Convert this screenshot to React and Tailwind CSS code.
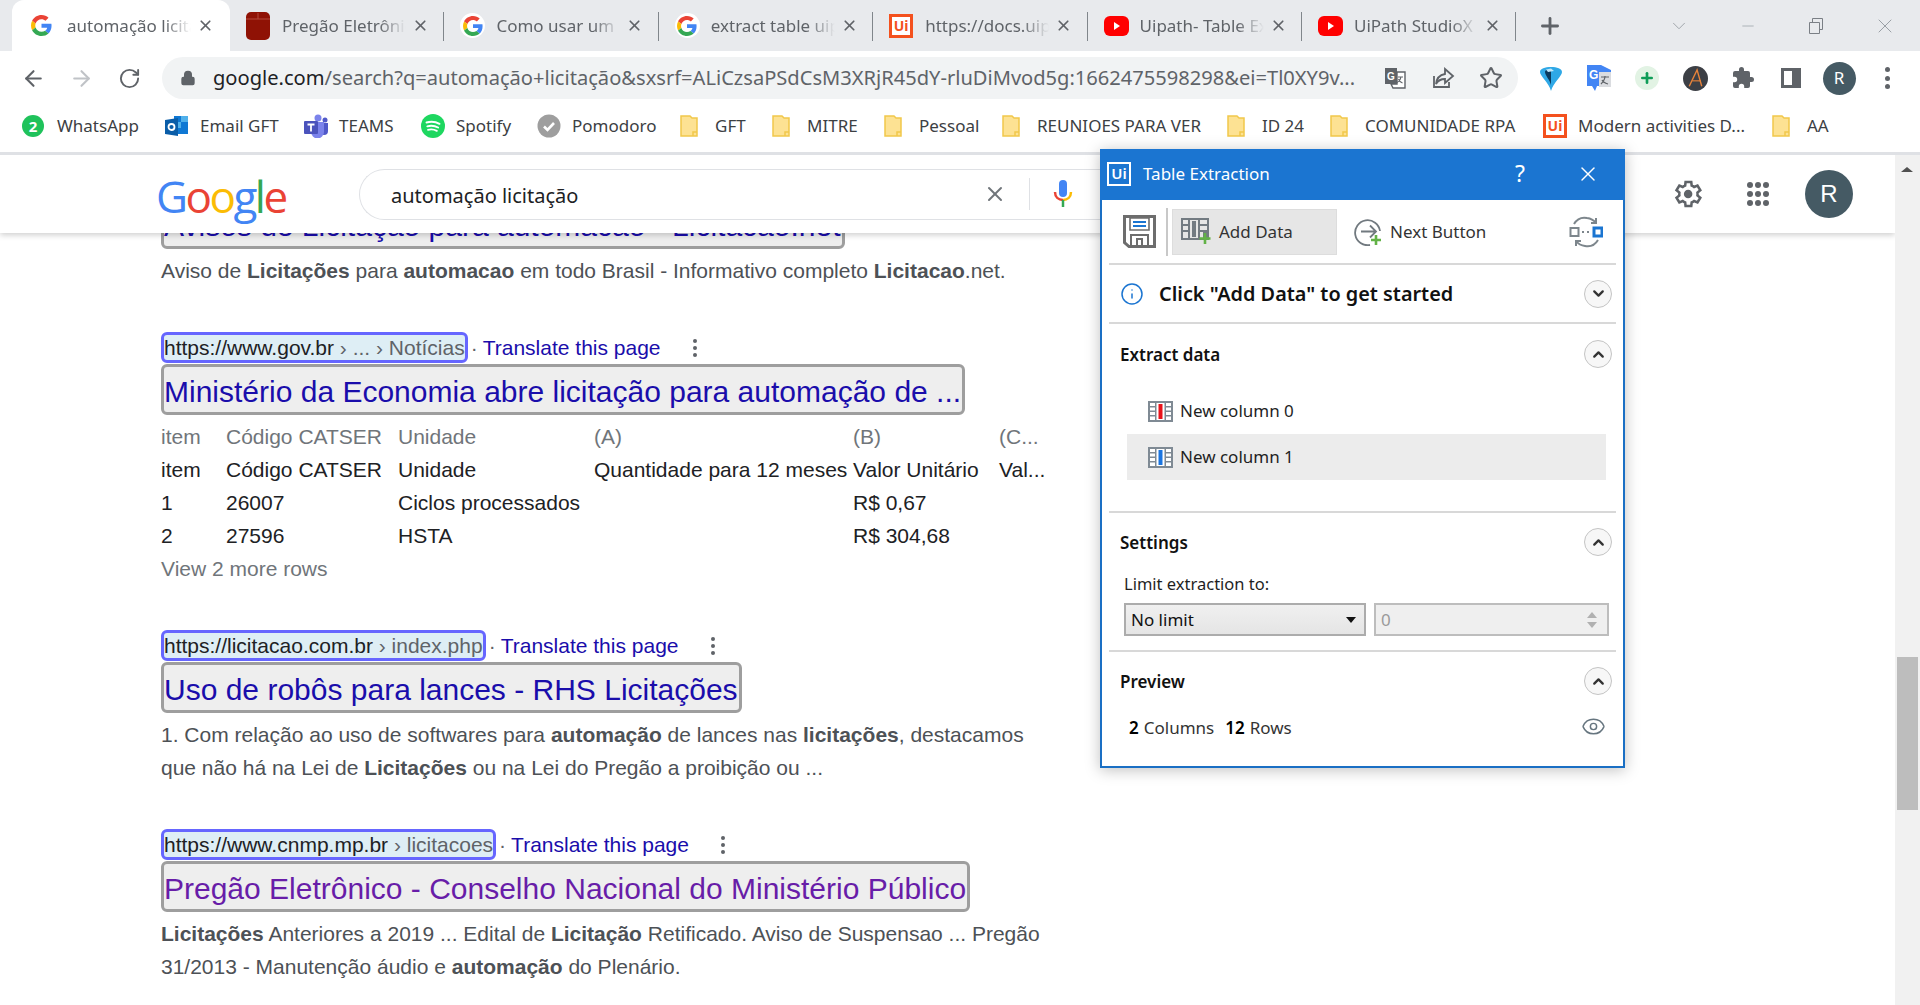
import { ArrowLeft, ArrowRight, RotateCw, Lock, Star, X, Plus, ChevronDown, ChevronUp, Info, Eye, Minus } from "lucide-react";

const GoogleG = ({ size = 21 }) => (
  <svg width={size} height={size} viewBox="0 0 48 48">
    <path fill="#EA4335" d="M24 9.5c3.54 0 6.71 1.22 9.21 3.6l6.85-6.85C35.9 2.38 30.47 0 24 0 14.62 0 6.51 5.38 2.56 13.22l7.98 6.19C12.43 13.72 17.74 9.5 24 9.5z" />
    <path fill="#4285F4" d="M46.98 24.55c0-1.57-.15-3.09-.38-4.55H24v9.02h12.94c-.58 2.96-2.26 5.48-4.78 7.18l7.73 6c4.51-4.18 7.09-10.36 7.09-17.65z" />
    <path fill="#FBBC05" d="M10.53 28.59c-.48-1.45-.76-2.99-.76-4.59s.27-3.14.76-4.59l-7.98-6.19C.92 16.46 0 20.12 0 24c0 3.88.92 7.54 2.56 10.78l7.97-6.19z" />
    <path fill="#34A853" d="M24 48c6.48 0 11.93-2.13 15.89-5.81l-7.73-6c-2.15 1.45-4.92 2.3-8.16 2.3-6.26 0-11.57-4.22-13.47-9.91l-7.98 6.19C6.51 42.62 14.62 48 24 48z" />
  </svg>
);

const GFavicon = () => (
  <span className="flex h-[25px] w-[25px] items-center justify-center rounded-full bg-white">
    <GoogleG size={20} />
  </span>
);

const PregaoIcon = () => (
  <svg width="24" height="28" viewBox="0 0 24 28">
    <rect x="0" y="0" width="24" height="28" rx="5" fill="#8f1205" />
    <path d="M0 7h24" stroke="#b5483c" strokeWidth="1" />
    <path d="M12 1v6" stroke="#b5483c" strokeWidth="1" />
  </svg>
);

const UiLogo = () => (
  <span className="flex h-[24px] w-[24px] items-center justify-center border-[3px] border-[#f4511e] bg-white font-['Noto_Sans',sans-serif] text-[14px] font-bold leading-none text-[#f4511e]">
    Ui
  </span>
);

const YouTubeIcon = () => (
  <svg width="25" height="20" viewBox="0 0 25 20">
    <rect width="25" height="20" rx="6" fill="#f00" />
    <path d="M10 6l6 4-6 4z" fill="#fff" />
  </svg>
);

const FolderIcon = () => (
  <svg width="18" height="22" viewBox="0 0 18 22">
    <path d="M1 1h9l2 2h5v18H1z" fill="#fde293" stroke="#f1c84b" strokeWidth="1.5" />
    <path d="M13 21v-4h4" fill="none" stroke="#f1c84b" strokeWidth="1.5" />
  </svg>
);

const tabs = [
  { title: "automação licitação", icon: <GoogleG />, active: true },
  { title: "Pregão Eletrônico", icon: <PregaoIcon /> },
  { title: "Como usar um", icon: <GFavicon /> },
  { title: "extract table uipath", icon: <GFavicon /> },
  { title: "https://docs.uipath", icon: <UiLogo /> },
  { title: "Uipath- Table Extraction", icon: <YouTubeIcon /> },
  { title: "UiPath StudioX", icon: <YouTubeIcon /> },
];

const Tab = ({ title, icon, active }) => (
  <div className={`relative flex h-full shrink-0 items-center ${active ? "w-[218px] rounded-t-[12px] bg-white pl-[19px]" : "w-[214.4px] pl-[16px]"}`}>
    <span className="flex w-[36px] shrink-0 justify-start">{icon}</span>
    <span className="w-[124px] overflow-hidden whitespace-nowrap text-[17px] text-[#5f6368] [mask-image:linear-gradient(to_right,black_78%,transparent)]">
      {title}
    </span>
    <X className="ml-[6px] shrink-0 text-[#5f6368]" size={17} strokeWidth={2.4} />
    {!active && <span className="absolute right-0 top-[12px] h-[29px] w-px bg-[#80868b]" />}
  </div>
);

const TabStrip = () => (
  <div className="flex h-[51px] shrink-0 items-stretch bg-[#e8eaed] pl-[12px]">
    {tabs.map((tab) => (
      <Tab key={tab.title} {...tab} />
    ))}
    <Plus className="ml-[21px] mt-[13px] text-[#5f6368]" size={26} strokeWidth={2.6} />
    <div className="ml-auto flex items-center text-[#9aa0a6]">
      <span className="flex w-[68px] justify-center"><ChevronDown size={22} strokeWidth={1} /></span>
      <span className="flex w-[69px] justify-center"><Minus size={18} strokeWidth={1} /></span>
      <span className="flex w-[68px] justify-center">
        <svg width="16" height="16" viewBox="0 0 16 16" fill="none" stroke="#7a7f85">
          <path d="M1.5 4.5h10v11h-10zM4.5 4.5v-4h10v11h-3" />
        </svg>
      </span>
      <span className="flex w-[70px] justify-center pr-[1px]"><X size={24} strokeWidth={1} /></span>
    </div>
  </div>
);

const TranslateIcon = () => (
  <svg width="24" height="24" viewBox="0 0 24 24">
    <path d="M2 2h12v16H2z" fill="#5f6368" />
    <path d="M14 6h8v16H10l-2-4h6z" fill="#fff" stroke="#5f6368" strokeWidth="1.4" />
    <text x="4" y="14" fontSize="10" fontWeight="700" fill="#fff" fontFamily="Liberation Sans">G</text>
    <path d="M15 11h5M18 10.5c-.4 3-2 5-4 6M15.5 13c.7 2 2 3.3 4 4" fill="none" stroke="#5f6368" strokeWidth="1.1" />
  </svg>
);

const ShareIcon = () => (
  <svg width="24" height="24" viewBox="0 0 24 24" fill="none" stroke="#5f6368" strokeWidth="1.8">
    <path d="M3 10v11h15v-5" />
    <path d="M14 3l8 7-8 7v-4c-4 0-7 1.5-9 5 .5-5 3.500-9 9-10z" />
  </svg>
);

const Ext = ({ children }) => <span className="flex w-[48px] shrink-0 items-center justify-center">{children}</span>;

const Toolbar = () => (
  <div className="flex h-[54px] shrink-0 items-center bg-white pl-[9px]">
    <Ext><ArrowLeft className="text-[#5f6368]" size={25} strokeWidth={2} /></Ext>
    <Ext><ArrowRight className="text-[#c0c3c7]" size={25} strokeWidth={2} /></Ext>
    <Ext><RotateCw className="text-[#5f6368]" size={23} strokeWidth={2} /></Ext>
    <div className="ml-[9px] flex h-[42px] w-[1356px] shrink-0 items-center rounded-full bg-[#f1f3f4] pl-[18px] pr-[3px]">
      <Lock className="shrink-0 text-[#5f6368]" size={16} fill="#5f6368" strokeWidth={2} />
      <span className="ml-[17px] flex-1 overflow-hidden whitespace-nowrap pt-[1px] text-[20.1px] text-[#5f6368]">
        <span className="text-[#202124]">google.com</span>/search?q=automação+licitação&amp;sxsrf=ALiCzsaPSdCsM3XRjR45dY-rluDiMvod5g:1662475598298&amp;ei=Tl0XY9v...
      </span>
      <Ext><TranslateIcon /></Ext>
      <Ext><ShareIcon /></Ext>
      <Ext><Star className="text-[#5f6368]" size={24} strokeWidth={2} /></Ext>
    </div>
    <div className="ml-[9px] flex items-center">
      <Ext>
        <svg width="24" height="25" viewBox="0 0 24 25">
          <path d="M12 25C10 17 1 10 1 6c0-3.500 5-5 11-5s11 1.500 11 5c0 4-9 11-11 19z" fill="#2fa8e6" />
          <path d="M12 19C11 14 6 9.500 6 6c0-2 3-2.500 6-2.500z" fill="#0a3a5e" />
          <path d="M7 3.500l5-1 3 2.500-6 1z" fill="#bfe8fb" />
        </svg>
      </Ext>
      <Ext>
        <svg width="24" height="26" viewBox="0 0 24 26">
          <path d="M0 0h14l10 5v16H10l-2 5-3-5H0z" fill="#4285f4" />
          <path d="M12 7h12v15H12z" fill="#dadce0" />
          <text x="2" y="14" fontSize="12" fontWeight="700" fill="#fff" fontFamily="Liberation Sans">G</text>
          <path d="M14 12h8M18 11c0 4-2 6-4 8M15 15c1 2 3 3 6 4" stroke="#5f6368" fill="none" strokeWidth="1.2" />
        </svg>
      </Ext>
      <Ext>
        <span className="flex h-[24px] w-[24px] items-center justify-center rounded-full bg-[#e2f3e4] text-[#0f9d58]">
          <Plus size={16} strokeWidth={4} />
        </span>
      </Ext>
      <Ext>
        <svg width="25" height="25" viewBox="0 0 32 32">
          <circle cx="16" cy="16" r="16" fill="#3c3f45" />
          <path d="M8 26L18 5l6 21" fill="none" stroke="#e8833a" strokeWidth="1.8" />
          <path d="M12 19h11" stroke="#e8833a" strokeWidth="1.4" />
        </svg>
      </Ext>
      <Ext>
        <svg width="24" height="24" viewBox="0 0 24 24" fill="#5f6368">
          <path d="M20.5 11H19V7a2 2 0 0 0-2-2h-4V3.500a2.500 2.500 0 0 0-5 0V5H4a2 2 0 0 0-2 2v3.800h1.500a2.700 2.700 0 0 1 0 5.400H2V20a2 2 0 0 0 2 2h3.800v-1.500a2.700 2.700 0 0 1 5.400 0V22H17a2 2 0 0 0 2-2v-4h1.500a2.500 2.500 0 0 0 0-5z" />
        </svg>
      </Ext>
      <Ext>
        <svg width="20" height="20" viewBox="0 0 20 20">
          <path d="M0 0h20v20H0z" fill="#5f6368" />
          <path d="M3 3h8v14H3z" fill="#fff" />
        </svg>
      </Ext>
      <Ext>
        <span className="flex h-[33px] w-[33px] items-center justify-center rounded-full bg-[#455a64] text-[17px] text-white">R</span>
      </Ext>
      <Ext>
        <span className="flex flex-col gap-[3.5px]">
          <span className="h-[5px] w-[5px] rounded-full bg-[#5f6368]" />
          <span className="h-[5px] w-[5px] rounded-full bg-[#5f6368]" />
          <span className="h-[5px] w-[5px] rounded-full bg-[#5f6368]" />
        </span>
      </Ext>
    </div>
  </div>
);

const WhatsAppIcon = () => (
  <span className="relative flex h-[22px] w-[22px] items-center justify-center rounded-full bg-[#1fc25b] text-[15px] font-bold leading-none text-white">2</span>
);

const OutlookIcon = () => (
  <svg width="24" height="24" viewBox="0 0 24 24">
    <path d="M9 2h14v18H9z" fill="#0f78d4" />
    <path d="M16 2h7v6h-7zM9 8h7v6H9z" fill="#50b0ea" />
    <path d="M0 6l13-2v18L0 20z" fill="#0a5da8" />
    <circle cx="6.500" cy="13" r="3" fill="none" stroke="#fff" strokeWidth="1.800" />
  </svg>
);

const TeamsIcon = () => (
  <svg width="24" height="24" viewBox="0 0 24 24">
    <circle cx="14" cy="4" r="3.500" fill="#7b83eb" />
    <circle cx="21" cy="6" r="2.500" fill="#5059c9" />
    <path d="M16 9h8v8a4 4 0 0 1-8 0z" fill="#5059c9" />
    <path d="M7 8h13v10a6 6 0 0 1-13 0z" fill="#7b83eb" />
    <rect x="0" y="7" width="14" height="13" rx="1" fill="#4b53bc" />
    <path d="M3.500 10.500h7M7 10.500v7" stroke="#fff" strokeWidth="1.800" />
  </svg>
);

const SpotifyIcon = () => (
  <svg width="24" height="24" viewBox="0 0 24 24" fill="none">
    <circle cx="12" cy="12" r="12" fill="#1ed760" />
    <path d="M5.500 8.500c4.500-1.300 9-.9 13 1.300M6.300 12.300c3.800-1 7.500-.6 10.800 1.200M7 15.800c3.200-.8 6-.5 8.800 1" stroke="#fff" strokeWidth="1.900" strokeLinecap="round" />
  </svg>
);

const PomodoroIcon = () => (
  <svg width="24" height="24" viewBox="0 0 24 24" fill="none">
    <circle cx="12" cy="12" r="11.500" fill="#9e9e9e" />
    <path d="M7 12.500l3.500 3.500L17 9" stroke="#fff" strokeWidth="2.600" />
  </svg>
);

const bookmarks = [
  { label: "WhatsApp", icon: <WhatsAppIcon />, width: "w-[143px]" },
  { label: "Email GFT", icon: <OutlookIcon />, width: "w-[139px]" },
  { label: "TEAMS", icon: <TeamsIcon />, width: "w-[117px]" },
  { label: "Spotify", icon: <SpotifyIcon />, width: "w-[116px]" },
  { label: "Pomodoro", icon: <PomodoroIcon />, width: "w-[143px]" },
  { label: "GFT", icon: <FolderIcon />, width: "w-[92px]" },
  { label: "MITRE", icon: <FolderIcon />, width: "w-[112px]" },
  { label: "Pessoal", icon: <FolderIcon />, width: "w-[118px]" },
  { label: "REUNIOES PARA VER", icon: <FolderIcon />, width: "w-[225px]" },
  { label: "ID 24", icon: <FolderIcon />, width: "w-[103px]" },
  { label: "COMUNIDADE RPA", icon: <FolderIcon />, width: "w-[213px]" },
  { label: "Modern activities D...", icon: <UiLogo />, width: "w-[229px]" },
  { label: "AA", icon: <FolderIcon />, width: "w-[60px]" },
];

const BookmarksBar = () => (
  <div className="flex h-[50px] shrink-0 items-center border-b-[3px] border-[#dfe1e5] bg-white pb-[5px] pl-[22px]">
    {bookmarks.map((b) => (
      <div key={b.label} className={`flex shrink-0 items-center ${b.width}`}>
        <span className="flex w-[35px] shrink-0 items-center">{b.icon}</span>
        <span className="whitespace-nowrap text-[17px] text-[#3c4043]">{b.label}</span>
      </div>
    ))}
  </div>
);

const GoogleHeader = () => (
  <div className="relative z-10 flex h-[78px] shrink-0 items-center bg-white pl-[156px] shadow-[0_2px_6px_rgba(0,0,0,0.2)]">
    <span className="w-[203px] shrink-0 pt-[4px] font-['Open_Sans',sans-serif] text-[44px] leading-none tracking-[-2.5px]">
      <span className="text-[#4285f4]">G</span>
      <span className="text-[#ea4335]">o</span>
      <span className="text-[#fbbc05]">o</span>
      <span className="text-[#4285f4]">g</span>
      <span className="text-[#34a853]">l</span>
      <span className="text-[#ea4335]">e</span>
    </span>
    <div className="flex h-[51px] w-[760px] shrink-0 items-center rounded-l-full border border-r-0 border-[#dfe1e5] pl-[31px]">
      <span className="flex-1 pt-[3px] text-[20px] text-[#202124]">automação licitação</span>
      <X className="mr-[22px] text-[#70757a]" size={24} strokeWidth={2} />
      <span className="h-[32px] w-px bg-[#dfe1e5]" />
      <svg className="ml-[23px] mr-[46px]" width="20" height="30" viewBox="0 0 20 30" fill="none">
        <rect x="6" y="1" width="8" height="17" rx="4" fill="#4285f4" />
        <path d="M2 13c0 5 3.500 8 8 8" stroke="#ea4335" strokeWidth="2.500" />
        <path d="M18 13c0 5-3.500 8-8 8" stroke="#fbbc05" strokeWidth="2.500" />
        <path d="M10 21v7" stroke="#34a853" strokeWidth="2.500" />
      </svg>
    </div>
    <div className="ml-auto flex items-center pr-[42px]">
      <svg width="34" height="34" viewBox="0 0 24 24" fill="none" stroke="#5f6368" strokeWidth="1.800">
        <path d="M19.400 13a7.600 7.600 0 0 0 0-2l2-1.600-2-3.400-2.400 1a7.600 7.600 0 0 0-1.700-1L15 3.500h-4L10.700 6a7.600 7.600 0 0 0-1.700 1l-2.400-1-2 3.400 2 1.600a7.600 7.600 0 0 0 0 2l-2 1.600 2 3.400 2.400-1a7.600 7.600 0 0 0 1.700 1l.3 2.500h4l.3-2.500a7.600 7.600 0 0 0 1.700-1l2.400 1 2-3.400z" />
        <circle cx="12.800" cy="12" r="3" fill="#5f6368" stroke="none" />
      </svg>
      <span className="ml-[43px] grid grid-cols-3 gap-x-[2px] gap-y-[3px]">
        {[...Array(9)].map((_, i) => (
          <span key={i} className="h-[6px] w-[6px] rounded-full bg-[#5f6368]" />
        ))}
      </span>
      <span className="ml-[36px] flex h-[48px] w-[48px] items-center justify-center rounded-full bg-[#455a64] font-['Liberation_Sans',sans-serif] text-[24px] text-white">R</span>
    </div>
  </div>
);

const UrlRow = ({ domain, path }) => (
  <div className="flex h-[31px] items-center text-[21px] leading-none">
    <span className="flex h-[31px] items-center whitespace-pre rounded-[6px] border-[3px] border-[#6666ff] bg-[#deeef5] text-[#202124]">
      <span>{domain}</span>
      <span className="text-[#5f6368]">{path}</span>
    </span>
    <span className="ml-[3px] text-[#5f6368]">·</span>
    <span className="ml-[5px] whitespace-nowrap text-[#1a0dab]">Translate this page</span>
    <span className="ml-[32px] flex flex-col gap-[3px]">
      <span className="h-[4px] w-[4px] rounded-full bg-[#5f6368]" />
      <span className="h-[4px] w-[4px] rounded-full bg-[#5f6368]" />
      <span className="h-[4px] w-[4px] rounded-full bg-[#5f6368]" />
    </span>
  </div>
);

const TitleBox = ({ children, visited, className = "" }) => (
  <div className={`flex h-[51px] w-fit items-center whitespace-nowrap rounded-[6px] border-[3px] border-[#9e9e9e] bg-[#eeeeee] pr-[1px] pt-[5px] text-[30px] leading-none ${visited ? "text-[#681da8]" : "text-[#1a0dab]"} ${className}`}>
    {children}
  </div>
);

const Snippet = ({ children }) => <p className="mt-[5px] w-[890px] text-[21px] leading-[33px] text-[#4d5156]">{children}</p>;

const tableRows = [
  { cells: ["item", "Código CATSER", "Unidade", "(A)", "(B)", "(C..."], muted: true },
  { cells: ["item", "Código CATSER", "Unidade", "Quantidade para 12 meses", "Valor Unitário", "Val..."] },
  { cells: ["1", "26007", "Ciclos processados", "", "R$ 0,67", ""] },
  { cells: ["2", "27596", "HSTA", "", "R$ 304,68", ""] },
];

const Results = () => (
  <div className="flex flex-col gap-[45px] pl-[161px] font-['Liberation_Sans',Arial,sans-serif]">
    <div className="-mt-[35px]">
      <TitleBox>Avisos de Licitação para automacao - Licitacao.net</TitleBox>
      <Snippet>
        Aviso de <b>Licitações</b> para <b>automacao</b> em todo Brasil - Informativo completo <b>Licitacao</b>.net.
      </Snippet>
    </div>

    <div>
      <UrlRow domain="https://www.gov.br" path=" › ... › Notícias" />
      <TitleBox className="mt-[1px]">Ministério da Economia abre licitação para automação de ...</TitleBox>
      <div className="mt-[5px] text-[21px] leading-[33px] text-[#202124]">
        {tableRows.map((row, i) => (
          <div key={i} className={`grid grid-cols-[65px_172px_196px_259px_146px_60px] ${row.muted ? "text-[#70757a]" : ""}`}>
            {row.cells.map((c, j) => (
              <span key={j} className="whitespace-nowrap">{c}</span>
            ))}
          </div>
        ))}
        <div className="text-[#70757a]">View 2 more rows</div>
      </div>
    </div>

    <div>
      <UrlRow domain="https://licitacao.com.br" path=" › index.php" />
      <TitleBox className="mt-[1px]">Uso de robôs para lances - RHS Licitações</TitleBox>
      <Snippet>
        1. Com relação ao uso de softwares para <b>automação</b> de lances nas <b>licitações</b>, destacamos que não há na Lei de <b>Licitações</b> ou na Lei do Pregão a proibição ou ...
      </Snippet>
    </div>

    <div>
      <UrlRow domain="https://www.cnmp.mp.br" path=" › licitacoes" />
      <TitleBox className="mt-[1px]" visited>Pregão Eletrônico - Conselho Nacional do Ministério Público</TitleBox>
      <Snippet>
        <b>Licitações</b> Anteriores a 2019 ... Edital de <b>Licitação</b> Retificado. Aviso de Suspensao ... Pregão 31/2013 - Manutenção áudio e <b>automação</b> do Plenário.
      </Snippet>
    </div>
  </div>
);

const Scrollbar = () => (
  <div className="flex w-[25px] shrink-0 flex-col bg-[#f1f1f1]">
    <div className="flex h-[27px] items-center justify-center pr-[1px] pt-[1px]">
      <span className="h-0 w-0 border-x-[6px] border-b-[5px] border-x-transparent border-b-[#505050]" />
    </div>
    <div className="ml-[2px] mt-[475px] h-[153px] w-[21px] bg-[#bdbdbd]" />
  </div>
);

const CircleToggle = ({ up, className = "" }) => (
  <span className={`flex h-[28px] w-[28px] items-center justify-center rounded-full border border-[#c4c4c4] bg-[#f7f7f7] text-[#333] ${className}`}>
    {up ? <ChevronUp size={17} strokeWidth={3.2} /> : <ChevronDown size={17} strokeWidth={3.2} />}
  </span>
);

const ColumnIcon = ({ color }) => (
  <svg width="25" height="21" viewBox="0 0 25 21">
    <path d="M0 0h25v21H0z" fill="#7f8a94" />
    <path d="M2 2h5v3H2zM2 6.500h5v3H2zM2 11h5v3H2zM2 15.500h5v3.500H2zM18 2h5v3h-5zM18 6.500h5v3h-5zM18 11h5v3h-5zM18 15.500h5v3.500h-5z" fill="#fff" />
    <path d="M8.500 2h8v17h-8z" fill="#fff" />
    <path d="M10.500 3h4v15h-4z" fill={color} />
  </svg>
);

const PanelDivider = () => <div className="mx-[7px] h-[2px] shrink-0 bg-[#d8d8d8]" />;

const SectionHeader = ({ title, className = "h-[60px]" }) => (
  <div className={`flex shrink-0 items-center justify-between pl-[18px] pr-[11px] ${className}`}>
    <span className="text-[17px] font-semibold text-[#111]">{title}</span>
    <CircleToggle up className="mb-[2px]" />
  </div>
);

const ColumnRow = ({ color, label, selected }) => (
  <div className={`ml-[25px] mr-[17px] flex h-[46px] items-center pl-[21px] ${selected ? "bg-[#ececec]" : ""}`}>
    <ColumnIcon color={color} />
    <span className="ml-[7px] text-[17px] text-[#1f1f1f]">{label}</span>
  </div>
);

const TableExtractionPanel = () => (
  <div className="absolute left-[1100px] top-[149px] z-20 flex h-[619px] w-[525px] flex-col border-x-[2px] border-b-[2px] border-[#1a6fc4] bg-white font-['Noto_Sans',sans-serif] shadow-[0_2px_14px_rgba(0,0,0,0.25)]">
    <div className="-mx-[2px] flex h-[51px] shrink-0 items-center bg-[#1b75d1] pb-[2px] pl-[7px] pr-[25px] text-white">
      <span className="flex h-[24px] w-[24px] items-center justify-center border-[2px] border-white text-[15px] font-semibold leading-none">Ui</span>
      <span className="ml-[12px] flex-1 text-[17px]">Table Extraction</span>
      <span className="mr-[51px] text-[23px] leading-none">?</span>
      <X size={24} strokeWidth={1.4} />
    </div>

    <div className="flex h-[63px] shrink-0 items-center pl-[21px]">
      <svg width="33" height="33" viewBox="0 0 33 33" fill="none">
        <path d="M1.500 1.500h30v30H6l-4.500-4z" stroke="#6d6d6d" strokeWidth="3" />
        <path d="M7 3h19v12H7z" stroke="#6d6d6d" strokeWidth="1.600" />
        <path d="M10 7h13M10 11h13" stroke="#1b75d1" strokeWidth="2.200" />
        <path d="M8 31V20h17v11M14 31v-7h5v7" stroke="#6d6d6d" strokeWidth="2" />
      </svg>
      <span className="ml-[10px] h-[48px] w-[2px] bg-[#c8c8c8]" />
      <div className="ml-[4px] flex h-[46px] w-[165px] items-center border border-[#dddddd] bg-[#e6e6e6] pl-[8px]">
        <svg width="30" height="27" viewBox="0 0 30 27">
          <path d="M0 0h28v22H0z" fill="#737b82" />
          <path d="M2 2h5v4H2zM2 8h5v4H2zM2 14h5v6H2zM19 2h7v4h-7zM19 8h7v4h-7zM19 14h3v6h-3z" fill="#e6e6e6" />
          <path d="M9 2h8v18H9z" fill="#e6e6e6" />
          <path d="M11 3h4v16h-4z" fill="#737b82" />
          <path d="M24 15v11M18.500 20.500h11" stroke="#62b246" strokeWidth="2.600" />
        </svg>
        <span className="ml-[8px] text-[17px] text-[#333]">Add Data</span>
      </div>
      <svg className="ml-[17px]" width="28" height="28" viewBox="0 0 28 28" fill="none">
        <path d="M26 13a12.500 12.500 0 1 0-10 14" stroke="#71797f" strokeWidth="1.800" />
        <path d="M7 13.500h15M16 7.500l6 6-6 6" stroke="#71797f" strokeWidth="1.800" />
        <path d="M22 17v10M17 22h10" stroke="#62b246" strokeWidth="2.600" />
      </svg>
      <span className="ml-[8px] flex-1 text-[17px] text-[#333]">Next Button</span>
      <svg className="mr-[20px]" width="34" height="32" viewBox="0 0 34 32" fill="none">
        <path d="M5 8c3-5 8-7 13-6 4 .5 7 2.500 9 5M27 2v5h-5M29 24c-3 5-8 7-13 6-4-.5-7-2.500-9-5M7 30v-5h5" stroke="#7d868c" strokeWidth="2" />
        <path d="M1.500 12h8v8h-8z" stroke="#7d868c" strokeWidth="2" />
        <path d="M25 12h8v8h-8z" stroke="#1b75d1" strokeWidth="3" />
        <path d="M13 16h2M18 16h2" stroke="#7d868c" strokeWidth="2" />
      </svg>
    </div>
    <PanelDivider />

    <div className="flex h-[57px] shrink-0 items-center pl-[18px] pr-[11px]">
      <Info className="text-[#1b75d1]" size={24} strokeWidth={1.5} />
      <span className="ml-[15px] flex-1 text-[19.850px] font-semibold text-[#111]">Click "Add Data" to get started</span>
      <CircleToggle />
    </div>
    <PanelDivider />

    <SectionHeader title="Extract data" className="h-[62px]" />
    <div className="mt-[2px]">
      <ColumnRow color="#e8131b" label="New column 0" />
      <ColumnRow color="#1b75e0" label="New column 1" selected />
    </div>
    <div className="h-[31px] shrink-0" />
    <PanelDivider />

    <SectionHeader title="Settings" className="h-[60px]" />
    <div className="pl-[22px] pr-[14px]">
      <div className="flex h-[22px] items-center text-[16.500px] text-[#1f1f1f]">Limit extraction to:</div>
      <div className="mt-[8px] flex gap-[8px]">
        <div className="flex h-[33px] w-[242px] items-center justify-between border-2 border-[#acacac] bg-gradient-to-b from-[#f0f0f0] to-[#e5e5e5] pl-[5px] pr-[8px] text-[17px] text-[#111]">
          No limit
          <span className="h-0 w-0 border-x-[5px] border-t-[6px] border-x-transparent border-t-[#111]" />
        </div>
        <div className="flex h-[33px] w-[235px] items-center justify-between border-2 border-[#bdbdbd] bg-[#efefef] pl-[5px] pr-[10px] text-[17px] text-[#9a9a9a]">
          0
          <span className="flex flex-col gap-[4px]">
            <span className="h-0 w-0 border-x-[5px] border-b-[6px] border-x-transparent border-b-[#b0b0b0]" />
            <span className="h-0 w-0 border-x-[5px] border-t-[6px] border-x-transparent border-t-[#b0b0b0]" />
          </span>
        </div>
      </div>
    </div>
    <div className="h-[14px] shrink-0" />
    <PanelDivider />

    <SectionHeader title="Preview" className="h-[60px]" />
    <div className="flex h-[32px] items-center pl-[27px] pr-[17px] text-[17px] text-[#333]">
      <b className="font-semibold text-black">2</b>
      <span className="ml-[5px]">Columns</span>
      <b className="ml-[11px] font-semibold text-black">12</b>
      <span className="ml-[5px] flex-1">Rows</span>
      <Eye className="mb-[3px] text-[#66757f]" size={25} strokeWidth={1.4} />
    </div>
  </div>
);

export default function App() {
  return (
    <div className="relative flex h-screen w-full flex-col overflow-hidden bg-white font-['Noto_Sans',sans-serif]">
      <TabStrip />
      <Toolbar />
      <BookmarksBar />
      <div className="flex min-h-0 flex-1">
        <div className="flex min-w-0 flex-1 flex-col overflow-hidden">
          <GoogleHeader />
          <Results />
        </div>
        <Scrollbar />
      </div>
      <TableExtractionPanel />
    </div>
  );
}
